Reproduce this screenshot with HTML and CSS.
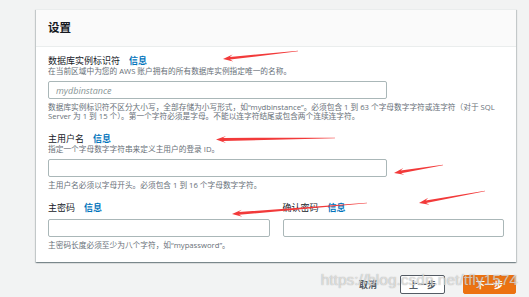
FILE: index.html
```html
<!DOCTYPE html>
<html lang="zh-CN">
<head>
    <meta charset="UTF-8">
    <meta name="viewport" content="width=device-width, initial-scale=1.0">
    <title>设置</title>
    <link rel="stylesheet" href="styles.css">
</head>
<body>
    <div class="page">
        <div class="card">
            <div class="card-header">
                <h2>设置</h2>
            </div>
            <div class="card-body">
                <div class="field">
                    <div class="label">数据库实例标识符<a class="info">信息</a></div>
                    <p class="desc">在当前区域中为您的 AWS 账户拥有的所有数据库实例指定唯一的名称。</p>
                    <input class="input input-wide" type="text" placeholder="mydbinstance">
                    <p class="help">数据库实例标识符不区分大小写，全部存储为小写形式，如“mydbinstance”。必须包含 1 到 63 个字母数字字符或连字符（对于 SQL<br>Server 为 1 到 15 个）。第一个字符必须是字母。不能以连字符结尾或包含两个连续连字符。</p>
                </div>
                <div class="field">
                    <div class="label">主用户名<a class="info">信息</a></div>
                    <p class="desc">指定一个字母数字字符串来定义主用户的登录 ID。</p>
                    <input class="input input-wide" type="text">
                    <p class="help">主用户名必须以字母开头。必须包含 1 到 16 个字母数字字符。</p>
                </div>
                <div class="field">
                    <div class="field-row">
                        <div class="col">
                            <div class="label">主密码<a class="info">信息</a></div>
                            <input class="input" type="password">
                        </div>
                        <div class="col">
                            <div class="label">确认密码<a class="info">信息</a></div>
                            <input class="input" type="password">
                        </div>
                    </div>
                    <p class="help">主密码长度必须至少为八个字符，如“mypassword”。</p>
                </div>
            </div>
        </div>
        <div class="actions">
            <button class="btn btn-link">取消</button>
            <button class="btn btn-normal">上一步</button>
            <button class="btn btn-primary">下一步</button>
        </div>
    </div>

    <!-- red annotation arrows drawn over the form -->
    <svg class="marks" width="529" height="297" viewBox="0 0 529 297">
        <polygon points="298,50.7 229.8,57 232.6,54.5 223,59 233.3,61.4 230.1,59.6 298,51.3"/>
        <polygon points="335,137.7 223,137.9 226,135.9 216,139.5 226,142.9 223,140.9 335,138.3"/>
        <polygon points="443,164.7 400.7,170.6 403.3,167.9 394,173 404.4,174.8 401.1,173.2 443,165.3"/>
        <polygon points="485,190.7 425.7,200.5 428.2,197.8 419,203 429.5,204.7 426.1,203 485,191.3"/>
        <polygon points="367,202.7 238.9,212 241.7,209.7 232,214 242.3,216.7 239.1,214.8 367,203.3"/>
    </svg>
    <div class="watermark">https://blog.csdn.net/tfly1574</div>
</body>
</html>
```

FILE: styles.css
```css
body {
    margin: 0;
    background-color: #f2f3f3;
    font-family: "Open Sans", "Noto Sans CJK SC", sans-serif;
    color: #16191f;
    position: relative;
    width: 529px;
    height: 297px;
    overflow: hidden;
}
.page {
    padding: 9px 0 0 36px;
    width: 480px;
}
.card {
    background: #fff;
    box-shadow: 0 1px 1px 0 rgba(0, 28, 36, 0.3), 1px 1px 1px 0 rgba(0, 28, 36, 0.15), -1px 1px 1px 0 rgba(0, 28, 36, 0.15);
    border-top: 1px solid #eaeded;
}
.card-header {
    background: #fafafa;
    border-bottom: 1px solid #eaeded;
    height: 36px;
    padding: 0 12px;
}
.card-header h2 {
    margin: 0;
    font-size: 11.5px;
    line-height: 36px;
    font-weight: bold;
}
.card-body {
    padding: 8px 12px 12px;
}
.field + .field {
    margin-top: 12px;
}
.label {
    font-size: 9px;
    line-height: 12px;
}
.info {
    color: #0073bb;
    font-weight: bold;
    margin-left: 9px;
}
.desc,
.help {
    margin: 0;
    font-size: 7.7px;
    line-height: 9px;
    color: #687078;
}
.input {
    display: block;
    box-sizing: border-box;
    width: 100%;
    height: 18px;
    margin-top: 5px;
    padding: 0 7px;
    border: 1px solid #aab7b8;
    border-radius: 2px;
    background: #fff;
    font-family: inherit;
    font-size: 9px;
}
.input::placeholder {
    color: #879596;
    font-style: italic;
}
.input-wide {
    width: 339px;
}
.help {
    margin-top: 4px;
}
.field-row {
    display: flex;
    gap: 13px;
}
.col {
    flex: 1;
}
.actions {
    display: flex;
    justify-content: flex-end;
    margin-top: 13px;
}
.btn {
    font-family: inherit;
    font-size: 9px;
    font-weight: bold;
    line-height: 17px;
    height: 19px;
    border-radius: 2px;
    padding: 0 8px;
    cursor: pointer;
}
.btn-link {
    border: 1px solid transparent;
    background: none;
    color: #545b64;
    margin-right: 14px;
}
.btn-normal {
    border: 1px solid #545b64;
    background: #fff;
    color: #545b64;
    margin-right: 18px;
}
.btn-primary {
    border: 1px solid #ec7211;
    background: #ec7211;
    color: #fff;
    padding: 0 12px;
}
.marks {
    position: absolute;
    top: 0;
    left: 0;
    pointer-events: none;
}
.marks polygon {
    fill: #f23a3a;
}
.watermark {
    position: absolute;
    top: 271px;
    right: 11px;
    font-family: "Liberation Sans", Arial, sans-serif;
    font-size: 15.5px;
    line-height: 18px;
    color: rgba(255, 255, 255, 0.6);
    text-shadow: 0 0 1px rgba(110, 110, 110, 0.7);
    pointer-events: none;
}
```
